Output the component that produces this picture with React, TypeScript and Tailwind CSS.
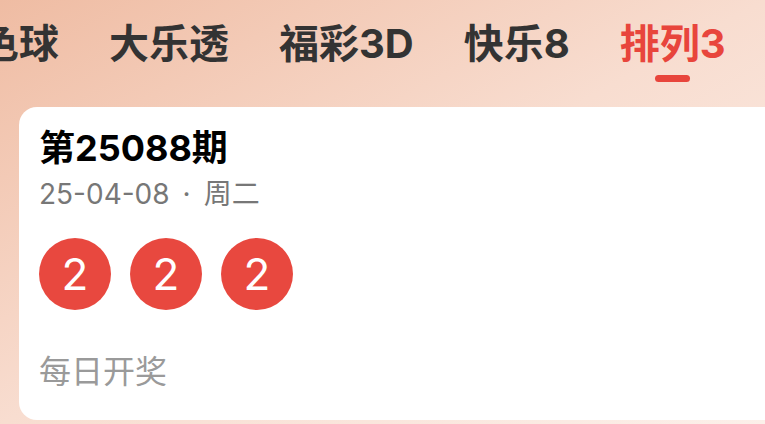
import React from 'react';

const tabs = ['双色球', '大乐透', '福彩3D', '快乐8', '排列3'];
const balls = [2, 2, 2];

export default function App() {
  const active = '排列3';

  return (
    <div
      className="w-[765px] h-[424px] overflow-hidden bg-gradient-to-br from-[#efbca3] via-[#f8ddd0] to-[#fcf0ea]"
      style={{ fontFamily: 'Inter, "Noto Sans CJK SC", sans-serif' }}
    >
      {/* Tabs */}
      <div className="flex gap-[50px] -ml-[61px] pt-[20px] h-[107px]">
        {tabs.map((t) => (
          <div key={t} className="flex flex-col items-center shrink-0">
            <span
              className={`text-[40px] leading-[48px] font-bold whitespace-nowrap ${
                t === active ? 'text-[#e8453c]' : 'text-[#333333]'
              }`}
            >
              {t}
            </span>
            {t === active && <div className="mt-[7px] w-[35px] h-[7px] rounded-full bg-[#e8453c]" />}
          </div>
        ))}
      </div>

      {/* Card */}
      <div className="ml-[19px] w-[790px] h-[313px] bg-white rounded-[18px] pl-[20px] pt-[18px]">
        <h1 className="text-[36px] leading-[46px] font-bold text-black">第25088期</h1>
        <p className="mt-[5px] text-[28px] leading-[36px] text-[#777777] flex">
          <span>25-04-08</span>
          <span className="mx-[13px]">·</span>
          <span>周二</span>
        </p>
        <div className="mt-[26px] flex gap-[19px]">
          {balls.map((b, i) => (
            <div
              key={i}
              className="w-[72px] h-[72px] rounded-full bg-[#e8483f] flex items-center justify-center text-white text-[44px] leading-none"
            >
              {b}
            </div>
          ))}
        </div>
        <p className="mt-[42px] text-[32px] leading-[40px] text-[#9a9a9a]">每日开奖</p>
      </div>
    </div>
  );
}
